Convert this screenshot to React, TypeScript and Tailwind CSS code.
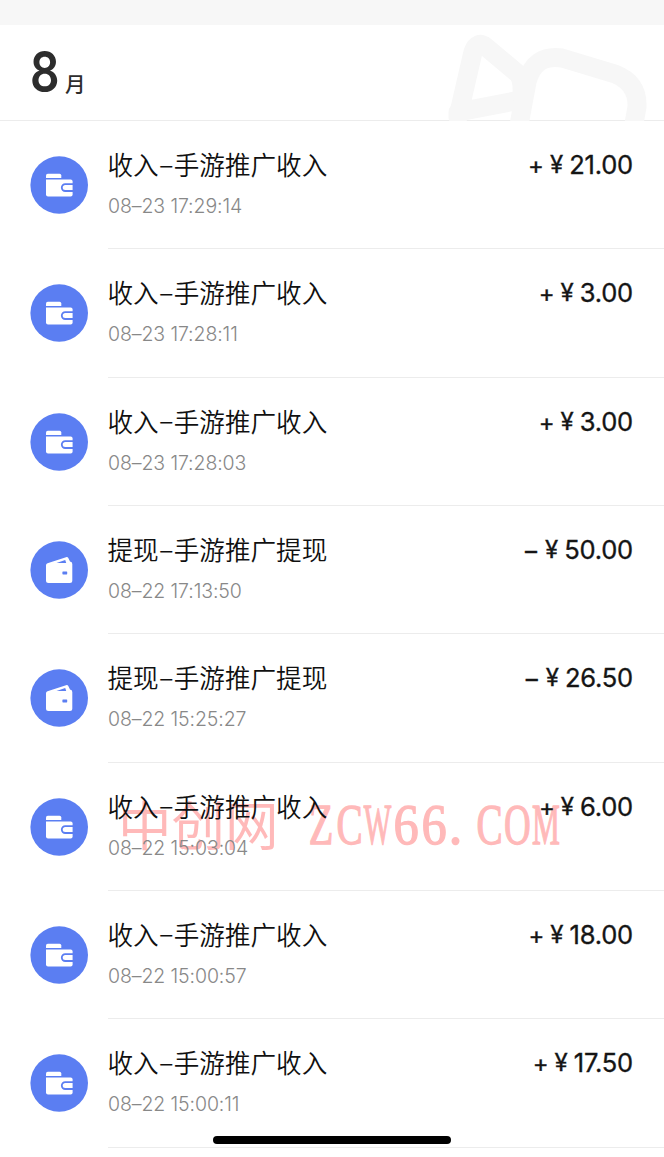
import clsx from "clsx";

type RecordItem = {
  type: "income" | "withdraw";
  time: string;
  amount: string;
};

const records: RecordItem[] = [
  { type: "income", time: "08–23 17:29:14", amount: "21.00" },
  { type: "income", time: "08–23 17:28:11", amount: "3.00" },
  { type: "income", time: "08–23 17:28:03", amount: "3.00" },
  { type: "withdraw", time: "08–22 17:13:50", amount: "50.00" },
  { type: "withdraw", time: "08–22 15:25:27", amount: "26.50" },
  { type: "income", time: "08–22 15:03:04", amount: "6.00" },
  { type: "income", time: "08–22 15:00:57", amount: "18.00" },
  { type: "income", time: "08–22 15:00:11", amount: "17.50" },
];

// each letter is squeezed into a half-width cell
const watermark = [
  { char: "Z", className: "scale-x-[0.72]" },
  { char: "C", className: "scale-x-[0.7]" },
  { char: "W", className: "scale-x-[0.52]" },
  { char: "6", className: "scale-x-[0.9]" },
  { char: "6", className: "scale-x-[0.9]" },
  { char: ".", className: "-translate-x-1.5" },
  { char: "C", className: "scale-x-[0.7]" },
  { char: "O", className: "scale-x-[0.66]" },
  { char: "M", className: "scale-x-[0.56]" },
];

const IncomeIcon = () => (
  <svg viewBox="0 0 58 58" className="size-[58px]">
    <circle cx="29.2" cy="29" r="28.8" fill="#5b7ef2" />
    <path d="M16 22V19.6q0-1.8 1.8-1.8H29.6q1.6 0 1.7 1.6V22Z" fill="#fff" />
    <path
      d="M16 23.6H40.6q2 0 2 2V38.6q0 2-2 2H18q-2 0-2-2Z"
      fill="#fff"
    />
    <path
      d="M43 28.2H35.2a3.4 3.4 0 0 0 0 6.8H43"
      fill="none"
      stroke="#5b7ef2"
      strokeWidth="1.8"
    />
  </svg>
);

const WithdrawIcon = () => (
  <svg viewBox="0 0 58 58" className="size-[58px]">
    <circle cx="29.2" cy="29" r="28.8" fill="#5b7ef2" />
    <path
      d="M16 24.3q0-1.5 1.5-2L36 16.2q1.6-.5 2.3.8L40 20.6q2.3.2 2.3 2.4V39.5q0 2.5-2.5 2.5H18.5q-2.5 0-2.5-2.5Z"
      fill="#fff"
    />
    <path d="M26.5 22 35.2 19 36.2 22Z" fill="#5b7ef2" />
    <rect x="32.4" y="30.4" width="4.8" height="3" rx=".6" fill="#5b7ef2" />
  </svg>
);

const CameraOutline = () => (
  <svg
    viewBox="0 0 234 96"
    className="absolute top-0 right-0 h-24 w-[234px]"
    fill="none"
    stroke="#f7f7f7"
    strokeWidth="19"
    strokeLinejoin="round"
  >
    <path d="M28 92 43 27q4-12 13-5L87 48Q93 53 92 70Q90 76 80 77L28 87Z" />
    <path d="M89 100 97 57Q104 29 132 33L185 49Q208 58 207 82L203 104" />
  </svg>
);

const RecordRow = ({ item }: { item: RecordItem }) => {
  const isIncome = item.type === "income";
  const label = isIncome ? "收入" : "提现";

  return (
    <li className="flex h-[128.3px] pl-[30px]">
      <div className="pt-[35px]">
        {isIncome ? <IncomeIcon /> : <WithdrawIcon />}
      </div>
      <div className="ml-5 flex flex-1 justify-between border-b border-[#ececec] pt-[26px] pr-[31px]">
        <div>
          <p className="-mt-px -ml-[0.5px] flex h-9 items-center text-[25.6px] leading-9 font-[350] text-[#101010]">
            <span>{label}</span>
            <span className="flex w-[15px] justify-center pt-[3px] font-['Inter'] text-[24px] font-light">
              –
            </span>
            <span>手游推广{label}</span>
          </p>
          <p className="mt-[9px] font-['Inter'] text-[19.5px] leading-[30px] font-light tracking-[-0.1px] text-[#888888]">
            {item.time}
          </p>
        </div>
        <p className="flex h-9 items-center font-['Inter'] text-[25.5px] leading-9 font-normal text-[#151515] [-webkit-text-stroke:0.35px_#151515]">
          <span
            className={clsx("pt-0.5 text-[24px]", isIncome ? "mr-1.5" : "mr-2")}
          >
            {isIncome ? "+" : "–"}
          </span>
          <span className="mr-[6px] text-[24px]">¥</span>
          <span className="tracking-[-0.2px]">{item.amount}</span>
        </p>
      </div>
    </li>
  );
};

const App = () => {
  return (
    <div className="relative h-[1157px] w-[664px] overflow-hidden bg-white font-['Noto_Sans_CJK_SC',sans-serif]">
      <div className="h-[25px] bg-[#f7f7f7]" />
      <header className="relative flex h-24 items-baseline border-b border-[#ececec] pl-[30px] text-[#2d2d2d]">
        <CameraOutline />
        <span className="relative -top-px w-[35px] origin-left scale-x-[0.81] font-['Inter'] text-[57px] leading-[96px] font-semibold">
          8
        </span>
        <span className="relative -top-px text-[20.5px] font-medium">月</span>
      </header>

      <div
        aria-hidden
        className="absolute top-[790px] left-[118px] flex h-[70px] items-center text-[#ffb9b9]"
      >
        <span className="relative -top-0.5 text-[53.5px] leading-[70px] font-normal">
          中创网
        </span>
        <span className="ml-[29px] flex font-['Liberation_Serif'] text-[56px] leading-[70px] [-webkit-text-stroke:1.3px_#ffb9b9]">
          {watermark.map(({ char, className }, i) => (
            <span key={i} className="flex w-[28px] justify-center">
              <span className={clsx("block", className)}>{char}</span>
            </span>
          ))}
        </span>
      </div>

      <ul className="relative pt-[0.2px]">
        {records.map((item) => (
          <RecordRow key={item.time} item={item} />
        ))}
      </ul>

      <div className="absolute top-[1136px] left-[213px] h-2 w-[238px] rounded-full bg-black" />
    </div>
  );
};

export default App;
